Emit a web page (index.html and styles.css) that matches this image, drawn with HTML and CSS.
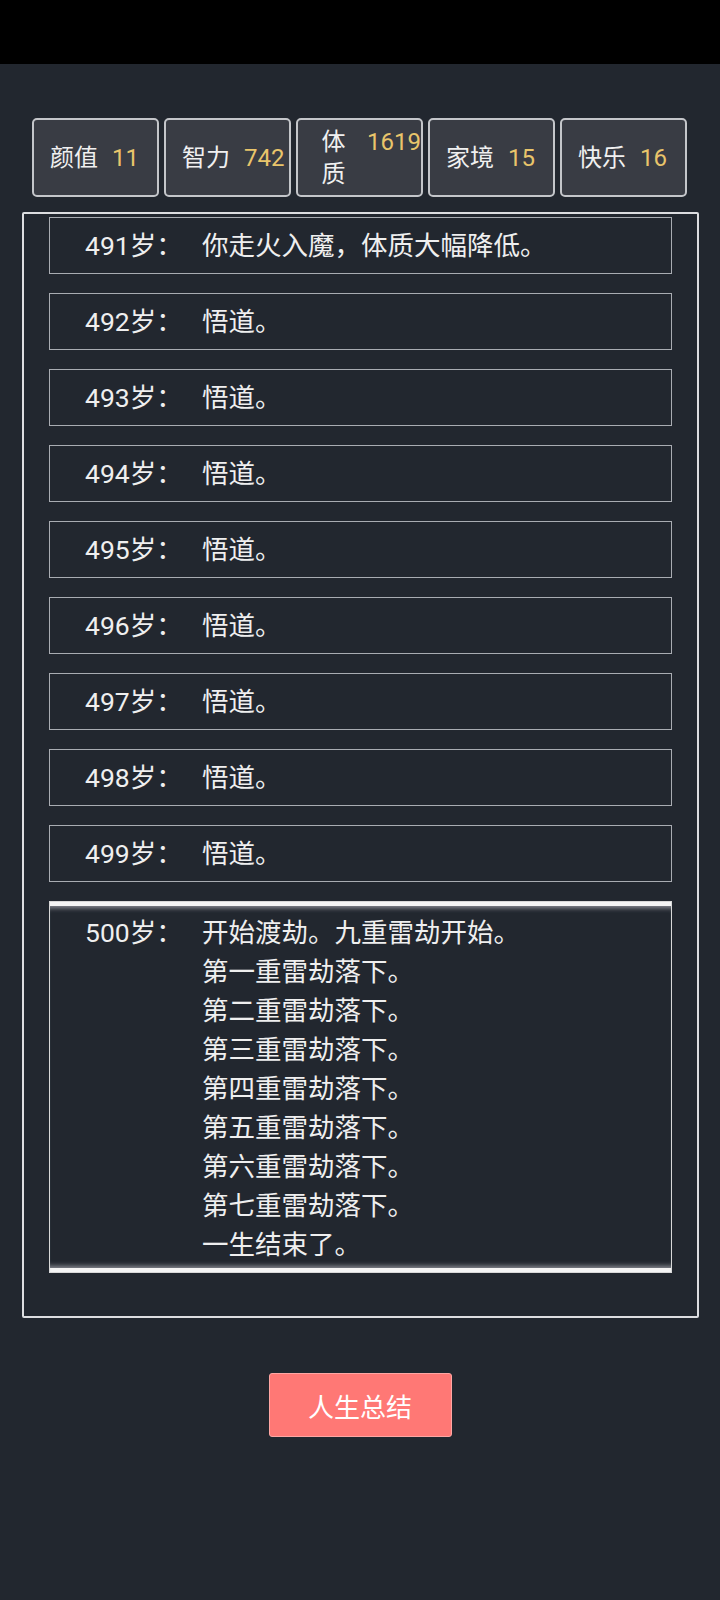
FILE: index.html
```html
<!DOCTYPE html>
<html lang="zh-CN">
<head>
<meta charset="utf-8">
<title>人生重开</title>
<link rel="stylesheet" href="styles.css">
</head>
<body>
<div class="statusbar"></div>
<main class="page">
  <section class="stats">
    <div class="stat"><div class="stat-in"><span class="stat-label">颜值</span><span class="stat-value">11</span></div></div>
    <div class="stat"><div class="stat-in"><span class="stat-label">智力</span><span class="stat-value">742</span></div></div>
    <div class="stat"><div class="stat-in"><span class="stat-label">体质</span><span class="stat-value">1619</span></div></div>
    <div class="stat"><div class="stat-in"><span class="stat-label">家境</span><span class="stat-value">15</span></div></div>
    <div class="stat"><div class="stat-in"><span class="stat-label">快乐</span><span class="stat-value">16</span></div></div>
  </section>
  <section class="log">
    <div class="row"><span class="age">491岁：</span><div class="text"><div>你走火入魔，体质大幅降低。</div></div></div>
    <div class="row"><span class="age">492岁：</span><div class="text"><div>悟道。</div></div></div>
    <div class="row"><span class="age">493岁：</span><div class="text"><div>悟道。</div></div></div>
    <div class="row"><span class="age">494岁：</span><div class="text"><div>悟道。</div></div></div>
    <div class="row"><span class="age">495岁：</span><div class="text"><div>悟道。</div></div></div>
    <div class="row"><span class="age">496岁：</span><div class="text"><div>悟道。</div></div></div>
    <div class="row"><span class="age">497岁：</span><div class="text"><div>悟道。</div></div></div>
    <div class="row"><span class="age">498岁：</span><div class="text"><div>悟道。</div></div></div>
    <div class="row"><span class="age">499岁：</span><div class="text"><div>悟道。</div></div></div>
    <div class="row row-last"><span class="age">500岁：</span><div class="text">
      <div>开始渡劫。九重雷劫开始。</div>
      <div>第一重雷劫落下。</div>
      <div>第二重雷劫落下。</div>
      <div>第三重雷劫落下。</div>
      <div>第四重雷劫落下。</div>
      <div>第五重雷劫落下。</div>
      <div>第六重雷劫落下。</div>
      <div>第七重雷劫落下。</div>
      <div>一生结束了。</div>
    </div></div>
  </section>
  <div class="actions"><button class="summary">人生总结</button></div>
</main>
</body>
</html>
```
FILE: styles.css
```css
* { box-sizing: border-box; }
html, body { margin: 0; padding: 0; }
body {
  background: #22272f;
  color: #ececec;
  font-family: Roboto, "Noto Sans CJK SC", sans-serif;
  min-height: 1600px;
}
.statusbar { height: 64px; background: #000; }
.page { display: flex; flex-direction: column; }
.stats {
  margin-top: 54px;
  padding: 0 33px 0 32px;
  display: grid;
  grid-template-columns: repeat(5, 1fr);
  gap: 5px;
}
.stat {
  height: 79px;
  border: 2px solid #c4c6ca;
  border-radius: 5px;
  background: #393c44;
  display: flex;
  flex-direction: column;
  justify-content: center;
  padding-left: 16px;
}
.stat-in {
  display: flex;
  align-items: flex-start;
  font-size: 24px;
  line-height: 32px;
}
.stat-label { flex: 0 1 auto; text-align: center; color: #f0f0f0; }
.stat-value { flex: none; margin-left: 14px; color: #e9c56b; }
.log {
  margin: 15px 21px 0 22px;
  height: 1106px;
  border: 2px solid #dcdde0;
  border-radius: 2px;
  padding-top: 3px;
  overflow: hidden;
}
.row {
  margin: 0 25px 19px;
  border: 1px solid #a9acb2;
  padding: 8px 0 8px 35px;
  display: flex;
  font-size: 26.5px;
  line-height: 39px;
  color: #efefef;
}
.age { flex: none; width: 117px; }
.text { flex: 1; }
.row-last {
  border-color: #d8d8d8;
  padding-top: 11px;
  padding-bottom: 8px;
  box-shadow:
    inset 0 4px 0 #f4f4f4,
    inset 0 10px 5px -4px #8e9198,
    inset 0 -4px 0 #f4f4f4,
    inset 0 -10px 5px -4px #8e9198;
}
.actions { display: flex; justify-content: center; margin-top: 55px; }
.summary {
  width: 183px;
  height: 64px;
  background: #ff7875;
  border: 1px solid #ffa6a3;
  border-radius: 3px;
  color: #fff;
  font-family: Roboto, "Noto Sans CJK SC", sans-serif;
  font-size: 26px;
  padding: 0;
}
```
